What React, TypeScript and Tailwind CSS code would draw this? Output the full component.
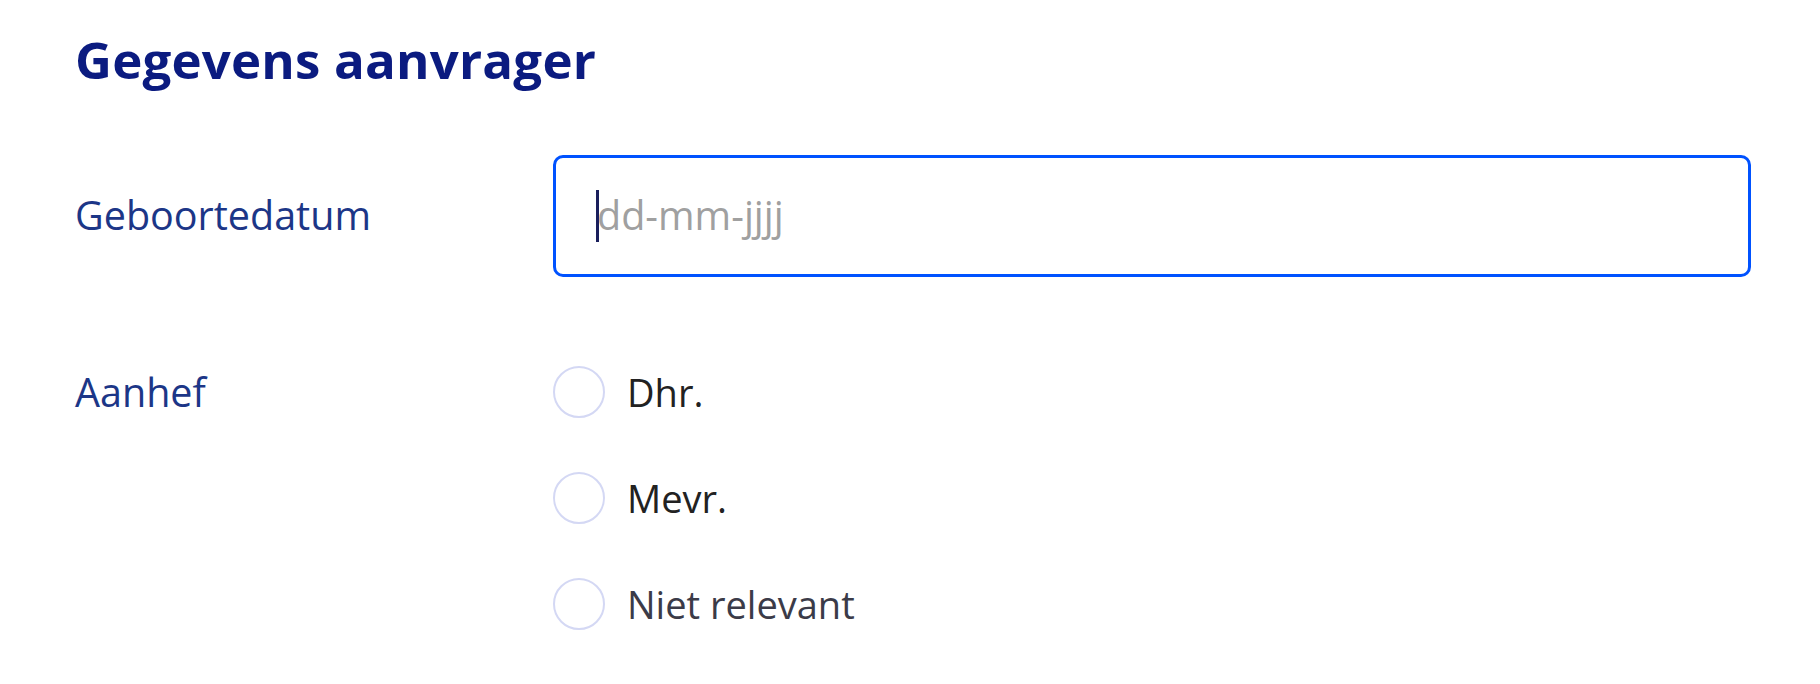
import React from "react";

const font = { fontFamily: '"Open Sans", "Noto Sans", sans-serif' };

function Radio({ label, color }: { label: string; color: string }) {
  return (
    <div className="flex items-center h-[52px]">
      <span className="w-[52px] h-[52px] rounded-full border-2 border-[#d4d8f4] bg-white shrink-0" />
      <span className={`ml-[22px] text-[38px] leading-none ${color}`}>{label}</span>
    </div>
  );
}

export default function App() {
  return (
    <div className="w-[1820px] h-[684px] bg-white pl-[75px] pt-[27px]" style={font}>
      <h2 className="text-[51px] font-bold leading-[64px] text-[#0b1b80] tracking-[0.2px]">
        Gegevens aanvrager
      </h2>
      <div className="flex items-center mt-[64px]">
        <div className="w-[478px] text-[39.5px] text-[#1c3687] leading-none">Geboortedatum</div>
        <div className="w-[1198px] h-[122px] rounded-[10px] border-[3.5px] border-[#0052ff] flex items-center pl-[40px]">
          <span className="w-[3px] h-[52px] bg-[#1a1f5c] -mr-[2px]" />
          <span className="text-[39.5px] text-[#a0a0a0] leading-none">dd-mm-jjjj</span>
        </div>
      </div>
      <div className="flex mt-[89px]">
        <div className="w-[478px] text-[39.5px] text-[#1c3687] leading-[52px]">Aanhef</div>
        <div className="flex flex-col gap-[54px]">
          <Radio label="Dhr." color="text-[#222222]" />
          <Radio label="Mevr." color="text-[#222222]" />
          <Radio label="Niet relevant" color="text-[#3b3b48]" />
        </div>
      </div>
    </div>
  );
}
